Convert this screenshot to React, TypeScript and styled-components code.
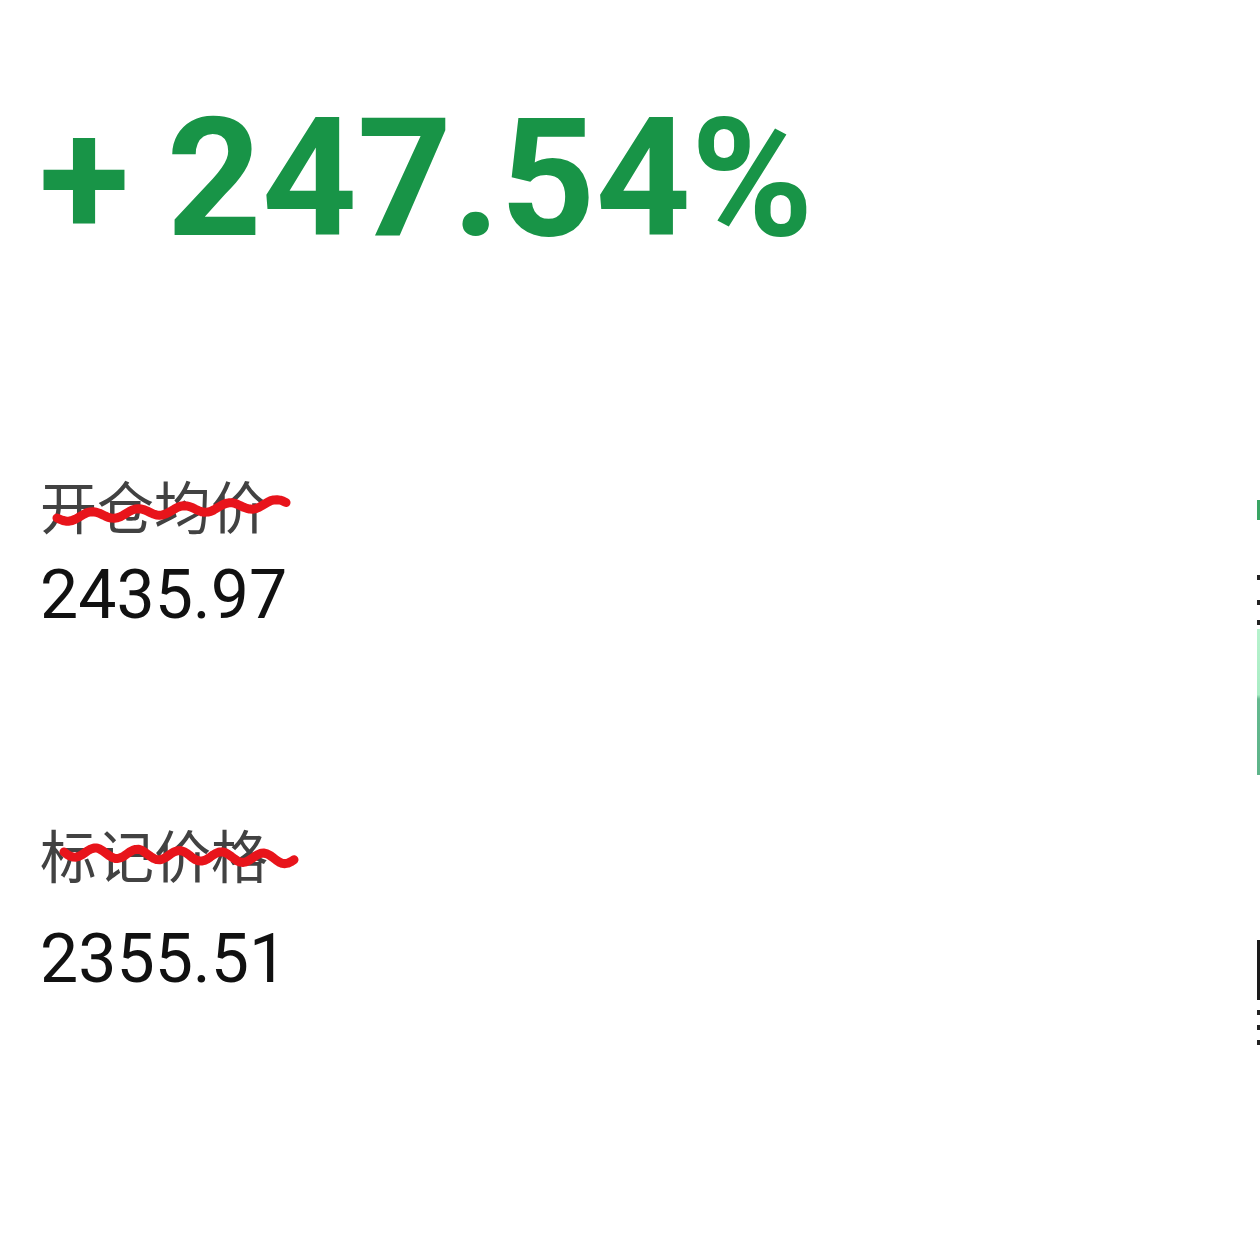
import styled, { createGlobalStyle } from 'styled-components'

const GlobalStyle = createGlobalStyle`
  html, body {
    margin: 0;
    padding: 0;
    background: #ffffff;
    overflow: hidden;
  }
`

const Page = styled.div`
  width: 1260px;
  height: 1247px;
  display: flex;
  overflow: hidden;
  background: #ffffff;
`

const Main = styled.main`
  flex: 0 0 1217px;
  padding-left: 40px;
  display: flex;
  flex-direction: column;
`

const Profit = styled.div`
  margin-top: 96px;
  font-family: Roboto, 'Liberation Sans', sans-serif;
  font-weight: 700;
  font-size: 166px;
  line-height: 1;
  color: #189447;
  white-space: nowrap;
  display: flex;
  align-items: baseline;
`

const Sign = styled.span`
  margin-left: -1px;
  margin-right: 37px;
`

const Field = styled.section<{ $top: number }>`
  margin-top: ${({ $top }) => $top}px;
  display: flex;
  flex-direction: column;
`

const Label = styled.div`
  position: relative;
  align-self: flex-start;
  font-family: 'Noto Sans CJK SC', 'Noto Sans', sans-serif;
  font-size: 57px;
  line-height: 1;
  color: #424242;
`

const Scribble = styled.svg`
  position: absolute;
  left: 0;
  top: 0;
  overflow: visible;
  pointer-events: none;
`

const Value = styled.div<{ $gap: number }>`
  margin-top: ${({ $gap }) => $gap}px;
  font-family: Roboto, 'Liberation Sans', sans-serif;
  font-size: 68px;
  line-height: 1;
  color: #111111;
`

const Side = styled.aside`
  flex: 0 0 200px;
  display: flex;
  flex-direction: column;
  align-items: flex-start;
`

const Tag = styled.div`
  margin-top: 500px;
  width: 60px;
  height: 20px;
  background: #3aa564;
`

const Dot = styled.div<{ $gap: number }>`
  margin-top: ${({ $gap }) => $gap}px;
  width: 6px;
  height: 5px;
  background: #222;
`

const Bar = styled.div`
  margin-top: 4px;
  width: 60px;
  height: 146px;
  background: linear-gradient(#b6f2cd 0%, #a8ecc4 45%, #64b98f 48%, #5eb48a 100%);
`

const Mark = styled.div`
  margin-top: 165px;
  width: 6px;
  height: 60px;
  background: #1a1a1a;
`

// hand-drawn red strike over the label
const Squiggle = ({ d }: { d: string }) => (
  <Scribble width="1" height="1">
    <path d={d} fill="none" stroke="#e8141b" strokeWidth="9" strokeLinecap="round" strokeLinejoin="round" />
  </Scribble>
)

function wave(x0: number, x1: number, y0: number, y1: number, period: number, amp: number) {
  let d = ''
  const steps = Math.round((x1 - x0) / 3)
  for (let i = 0; i <= steps; i++) {
    const t = i / steps
    const x = x0 + (x1 - x0) * t
    const y = y0 + (y1 - y0) * t + Math.sin(((x - x0) / period) * Math.PI * 2) * amp
    d += `${i === 0 ? 'M' : 'L'}${x.toFixed(1)} ${y.toFixed(1)} `
  }
  return d
}

export default function App() {
  return (
    <>
      <GlobalStyle />
      <Page>
        <Main>
          <Profit>
            <Sign>+</Sign>
            <span>247.54%</span>
          </Profit>

          <Field $top={214}>
            <Label>
              开仓均价
              <Squiggle d={wave(17, 246, 42, 27, 46, 4)} />
            </Label>
            <Value $gap={28}>2435.97</Value>
          </Field>

          <Field $top={196}>
            <Label>
              标记价格
              <Squiggle d={wave(24, 254, 27, 34, 42, 5)} />
            </Label>
            <Value $gap={43}>2355.51</Value>
          </Field>
        </Main>

        <Side>
          <Tag />
          <Dot $gap={55} />
          <Dot $gap={20} />
          <Dot $gap={15} />
          <Bar />
          <Mark />
          <Dot $gap={10} />
          <Dot $gap={10} />
          <Dot $gap={10} />
        </Side>
      </Page>
    </>
  )
}
